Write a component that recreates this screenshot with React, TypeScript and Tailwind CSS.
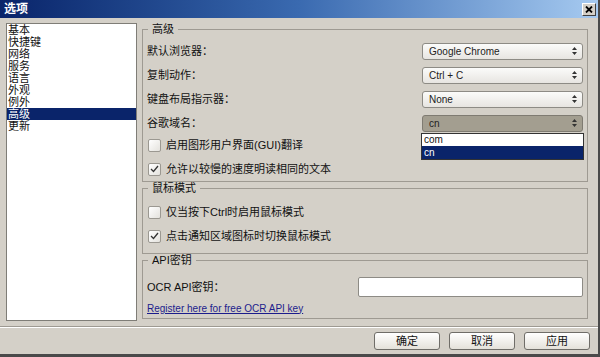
import React from 'react';

const items = ['基本', '快捷键', '网络', '服务', '语言', '外观', '例外', '高级', '更新'];

const Arrows = () => (
  <svg width="5" height="8" viewBox="0 0 5 8" className="shrink-0">
    <path d="M2.5 0 L5 3 L0 3Z M0 5 L5 5 L2.5 8Z" fill="#333" />
  </svg>
);

const Select = ({ value, active }: { value: string; active?: boolean }) => (
  <div
    className={
      active
        ? 'w-[161px] h-[17px] rounded-[3px] border border-[#7f7b72] bg-[#a39e90] flex items-center pl-[6px] pr-[5px] text-[10px] text-[#222]'
        : 'w-[161px] h-[17px] rounded-[3px] border border-[#8d8b85] bg-linear-to-b from-[#fbfbfa] to-[#e7e5e1] flex items-center pl-[6px] pr-[5px] text-[10px] text-[#222]'
    }
  >
    <span className="flex-1">{value}</span>
    <Arrows />
  </div>
);

const Check = ({ checked, label }: { checked?: boolean; label: string }) => (
  <div className="h-[24px] flex items-center">
    <div className="ml-[1px] w-[13px] h-[13px] rounded-[2px] border border-[#9b9891] bg-linear-to-br from-white to-[#e4e2dd] flex items-center justify-center">
      {checked && (
        <svg width="9" height="8" viewBox="0 0 9 8">
          <path d="M1 4 L3.5 6.5 L8 1" stroke="#333" strokeWidth="1.3" fill="none" />
        </svg>
      )}
    </div>
    <span className="ml-[5px] text-[11px] text-[#111]">{label}</span>
  </div>
);

const Row = ({ label, children }: { label: string; children: React.ReactNode }) => (
  <div className="h-[24px] flex items-center justify-between">
    <span className="text-[11px] text-[#111]">{label}</span>
    {children}
  </div>
);

const Group = ({ title, className, children }: { title: string; className: string; children: React.ReactNode }) => (
  <fieldset className={'border border-[#9e9a92] pl-[4px] pr-[4px] ' + className}>
    <legend className="ml-[1px] px-[4px] text-[11px] leading-[12px] text-[#111]">{title}</legend>
    {children}
  </fieldset>
);

const Button = ({ label }: { label: string }) => (
  <button className="w-[66px] h-[18px] rounded-[3px] border border-[#6f6d68] bg-linear-to-b from-white to-[#e4e1da] text-[11px] leading-[16px] text-[#111]">
    {label}
  </button>
);

export default function App() {
  return (
    <div className="relative w-[600px] h-[357px] overflow-hidden bg-[#d4d0c8] border-r-2 border-b-[3px] border-[#4a4a4a] flex flex-col font-['Liberation_Sans','Noto_Sans_CJK_SC',sans-serif]">
      {/* title bar */}
      <div className="h-[18px] shrink-0 flex items-center bg-linear-to-r from-[#0a246a] via-[#3a6ab0] to-[#a6caf0]">
        <span className="pl-[4px] text-[12px] font-bold text-white leading-[14px]">选项</span>
        <div className="ml-auto mr-[2px] w-[14px] h-[13px] bg-[#d4d0c8] border border-t-white border-l-white border-r-[#404040] border-b-[#404040] flex items-center justify-center">
          <svg width="8" height="7" viewBox="0 0 8 7">
            <path d="M1 0.5 L7 6.5 M7 0.5 L1 6.5" stroke="#000" strokeWidth="1.8" />
          </svg>
        </div>
      </div>

      {/* body */}
      <div className="h-[305px] shrink-0 flex">
        <div className="ml-[6px] mt-[5px] w-[131px] h-[298px] bg-white border border-[#7f7d77] flex flex-col">
          {items.map((it) => (
            <div
              key={it}
              className={
                it === '高级'
                  ? 'h-[12px] leading-[12px] px-[1px] text-[11px] bg-[#0a246a] text-white'
                  : 'h-[12px] leading-[12px] px-[1px] text-[11px] text-[#111]'
              }
            >
              {it}
            </div>
          ))}
        </div>

        <div className="ml-[5px] mt-[5px] w-[446px] flex flex-col">
          <Group title="高级" className="h-[159px] pt-[4px]">
            <Row label="默认浏览器：">
              <Select value="Google Chrome" />
            </Row>
            <Row label="复制动作：">
              <Select value="Ctrl + C" />
            </Row>
            <Row label="键盘布局指示器：">
              <Select value="None" />
            </Row>
            <Row label="谷歌域名：">
              <Select value="cn" active />
            </Row>
            <div className="-mt-[2px]">
              <Check label="启用图形用户界面(GUI)翻译" />
              <Check checked label="允许以较慢的速度明读相同的文本" />
            </div>
          </Group>

          <Group title="鼠标模式" className="h-[72px] pt-[6px]">
            <Check label="仅当按下Ctrl时启用鼠标模式" />
            <Check checked label="点击通知区域图标时切换鼠标模式" />
          </Group>

          <Group title="API密钥" className="h-[65px] pt-[9px]">
            <Row label="OCR API密钥：">
              <div className="w-[225px] h-[20px] bg-white border border-[#8d8b85] rounded-[2px]" />
            </Row>
            <div className="h-[18px] flex items-center">
              <span className="text-[10px] text-[#1c1c8c] underline">Register here for free OCR API key</span>
            </div>
          </Group>
        </div>
      </div>

      {/* separator */}
      <div className="mt-[3px] h-[2px] shrink-0 border-t border-[#9e9a92] border-b border-b-white" />

      {/* buttons */}
      <div className="mt-[4px] pr-[8px] flex justify-end gap-[9px]">
        <Button label="确定" />
        <Button label="取消" />
        <Button label="应用" />
      </div>

      {/* open dropdown list */}
      <div className="absolute left-[421px] top-[133px] w-[163px] h-[27px] border border-[#333] bg-white flex flex-col">
        <div className="h-[12px] leading-[12px] pl-[2px] text-[10px] text-[#111]">com</div>
        <div className="h-[13px] leading-[13px] pl-[2px] text-[10px] bg-[#0a246a] text-white">cn</div>
      </div>
    </div>
  );
}
